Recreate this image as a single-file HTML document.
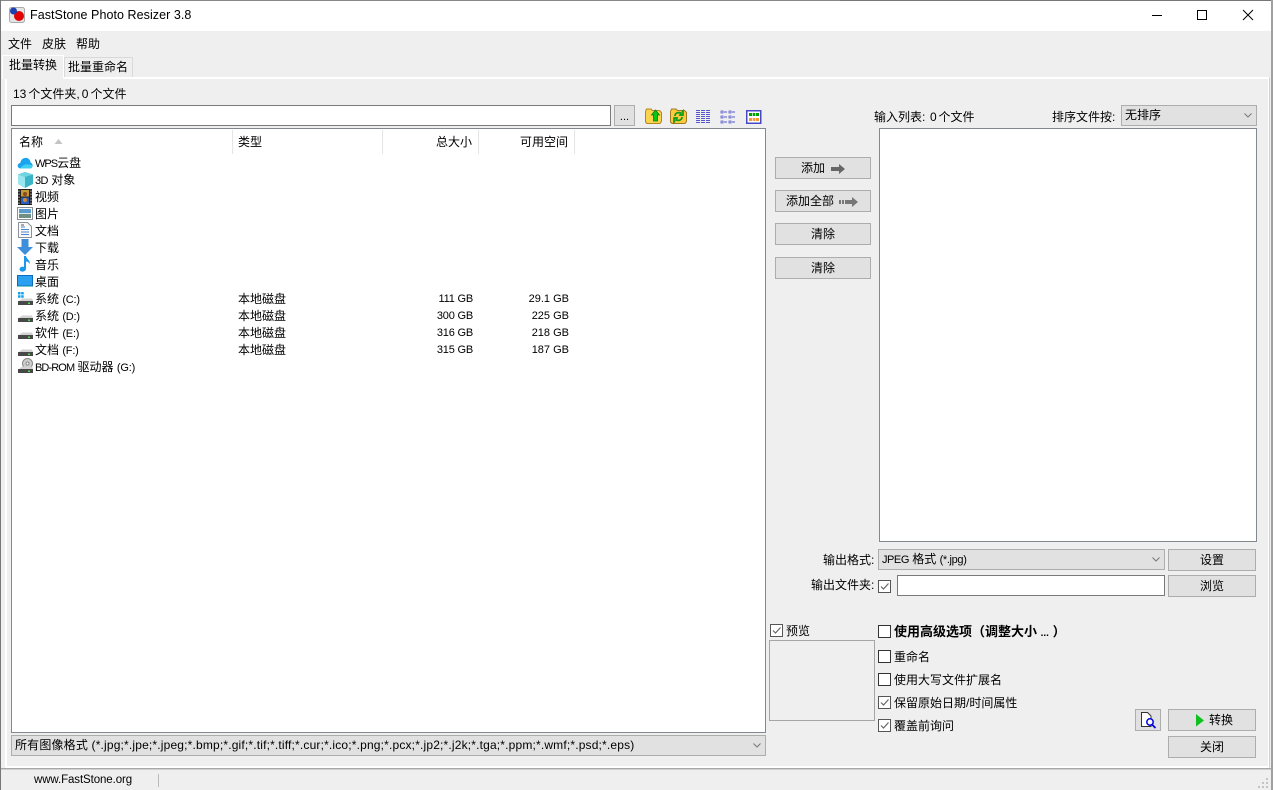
<!DOCTYPE html>
<html><head><meta charset="utf-8"><style>
*{box-sizing:border-box}
html,body{margin:0;padding:0;width:1273px;height:790px;overflow:hidden;background:#efefef}
body{position:relative;font:12px/17px "Liberation Sans","Noto Sans CJK SC",sans-serif;color:#000}
.a,.t{position:absolute}
.t{white-space:nowrap;line-height:17px}
.l{font-size:11px;letter-spacing:-.2px}
.b{position:absolute;background:#e1e1e1;border:1px solid #adadad;text-align:center;line-height:20px}
.i{position:absolute;background:#fff;border:1px solid #7a7a7a}
.c{position:absolute;background:#e1e1e1;border:1px solid #adadad;line-height:19px;padding-left:3px;white-space:nowrap}
.c svg{position:absolute;right:4px;top:7px}
.k{position:absolute;width:13px;height:13px;background:#fff;border:1px solid #333}
.k.on{border-color:#555}
.k svg{position:absolute;left:0;top:0}
svg{position:absolute;overflow:visible}
</style></head><body>
<div class="a" style="left:0;top:0;width:1273px;height:31px;background:#fff"></div>
<div class="a" style="left:0;top:0;width:840px;height:1px;background:#888"></div>
<div class="a" style="left:840px;top:0;width:433px;height:1px;background:#777"></div>
<div class="a" style="left:0;top:0;width:1px;height:790px;background:#777"></div>
<div class="a" style="left:1271px;top:0;width:2px;height:790px;background:#a0a0a0"></div>
<svg style="left:9px;top:7px" width="17" height="17"><rect x=".5" y=".5" width="15" height="15" rx="2" fill="#e4e4e4" stroke="#aaa"/><circle cx="10" cy="9" r="5" fill="#e00000"/><circle cx="4.500" cy="4" r="3.500" fill="#1c3fb0"/></svg>
<div class="t" style="left:30px;top:7px;font-size:12.500px;letter-spacing:.06px">FastStone Photo Resizer 3.8</div>
<div class="a" style="left:1152px;top:15px;width:10px;height:1px;background:#000"></div>
<div class="a" style="left:1197px;top:10px;width:10px;height:10px;border:1px solid #000"></div>
<svg style="left:1243px;top:10px" width="10" height="10"><path d="M0 0L10 10M10 0L0 10" stroke="#000" fill="none"/></svg>
<div class="t" style="left:8px;top:36px">文件</div><div class="t" style="left:42px;top:36px">皮肤</div><div class="t" style="left:76px;top:36px">帮助</div>
<div class="a" style="left:5px;top:77px;width:1265px;height:691px;background:#efefef;border:1px solid #fff;border-right-color:#d0d0d0;box-shadow:inset 0 0 0 1px #fff"></div>
<div class="a" style="left:2px;top:55px;width:62px;height:24px;background:#efefef;border:1px solid #fff;border-bottom:0"></div>
<div class="a" style="left:64px;top:57px;width:69px;height:20px;background:#efefef;border:1px solid #d9d9d9;border-bottom:0"></div>
<div class="t" style="left:9px;top:57px">批量转换</div><div class="t" style="left:68px;top:59px">批量重命名</div>
<div class="t" style="left:13px;top:86px;word-spacing:-1.300px">13 个文件夹, 0 个文件</div>
<div class="i" style="left:11px;top:105px;width:600px;height:21px"></div>
<div class="b" style="left:614px;top:105px;width:21px;height:21px;line-height:22px;font-size:11px">...</div>
<svg style="left:645px;top:108px" width="17" height="16"><path d="M.5 3.500L1.500 1H6L7.500 2.500H14.500L16.500 4.500V13.500L15 15.500H2L.5 14Z" fill="#fdd34d" stroke="#b08722"/><path d="M10.500 2L14.500 7H12.500V13H8.500V7H6.500Z" fill="#08c714" stroke="#067a10" stroke-width=".8"/></svg>
<svg style="left:670px;top:108px" width="17" height="16"><path d="M.5 3.500L1.500 1H6L7.500 2.500H14.500L16.500 4.500V13.500L15 15.500H2L.5 14Z" fill="#fdc93d" stroke="#a07a22"/><path d="M5 8C5 5 8 4 11 5L10 7L13 7V3L12 4M12 9C12 12 9 13 6 12L7 10H4V14L5 13" fill="none" stroke="#0a9b1a" stroke-width="1.700"/></svg>
<svg style="left:695px;top:110px" width="16" height="14"><path d="M1 .5H15M1 2.500H15M1 4.500H15M1 6.500H15M1 8.500H15M1 10.500H15M1 12.500H15" stroke="#5555cc" stroke-dasharray="4 1" fill="none"/></svg>
<svg style="left:720px;top:110px" width="16" height="14"><path d="M1 1H3V3H1ZM1 6H3V8H1ZM1 11H3V13H1ZM9 1H11V3H9ZM9 6H11V8H9ZM9 11H11V13H9Z" fill="none" stroke="#5555cc" stroke-width=".8"/><path d="M4 2H7M4 7H7M4 12H7M12 2H15M12 7H15M12 12H15" stroke="#5555cc"/></svg>
<svg style="left:746px;top:110px" width="16" height="14"><rect x=".75" y=".75" width="14" height="12.500" fill="#fff" stroke="#4848c4" stroke-width="1.500"/><path d="M3 3H6V6H3ZM6.700 3H9.300V6H6.700ZM10 3H13V6H10Z" fill="#00a000"/><path d="M3 8H6V11H3ZM6.700 8H9.300V11H6.700ZM10 8H13V11H10Z" fill="#ff9a2e"/></svg>

<div class="a" style="left:11px;top:128px;width:755px;height:605px;background:#fff;border:1px solid #828790"></div>
<div class="t" style="left:19px;top:134px">名称</div>
<svg style="left:54px;top:139px" width="9" height="6"><path d="M4.500 0L8.500 5H.5Z" fill="#c4c4c4"/></svg>
<div class="a" style="left:232px;top:130px;width:1px;height:24px;background:#e5e5e5"></div>
<div class="t" style="left:238px;top:134px">类型</div>
<div class="a" style="left:382px;top:130px;width:1px;height:24px;background:#e5e5e5"></div>
<div class="t" style="left:436px;top:134px">总大小</div>
<div class="a" style="left:478px;top:130px;width:1px;height:24px;background:#e5e5e5"></div>
<div class="t" style="left:520px;top:134px">可用空间</div>
<div class="a" style="left:574px;top:130px;width:1px;height:24px;background:#e5e5e5"></div>

<svg style="left:17px;top:156px" width="16" height="14"><path d="M4 12.500C1 12.500 0 10 1 8.500C2 7 3 7 3.500 6.500C4 3 7 1.500 10 2C13 3 13.500 5.500 13.500 6.500C15.500 7.500 16 9 15.500 10.500C15 12 14 12.500 12 12.500Z" fill="#1aa3ee"/><path d="M3 12.500C6 8 10 7.500 15.500 9.500C15 12 14 12.500 12 12.500Z" fill="#3fd0f0"/></svg>
<svg style="left:17px;top:172px" width="16" height="16"><path d="M8 0L16 2.500V12L8 16L1 12V2.500Z" fill="#3cb4c8"/><path d="M1 2.500L8 5V16L1 12Z" fill="#9be6ee"/><path d="M1 2.500L8 0L16 2.500L8 5Z" fill="#70d4e2"/></svg>
<svg style="left:18px;top:189px" width="14" height="16"><rect width="14" height="16" fill="#222"/><rect x="3" y="1" width="8" height="6.500" fill="#c49a38"/><rect x="3" y="8.500" width="8" height="6.500" fill="#2a5cc4"/><circle cx="7" cy="5" r="2" fill="#8a4a20"/><circle cx="7" cy="11" r="2" fill="#d08a30"/><path d="M1 1.500V15M13 1.500V15" stroke="#bbb" stroke-dasharray="1.500 1.500"/></svg>
<svg style="left:17px;top:207px" width="16" height="13"><rect x=".5" y=".5" width="15" height="12" fill="#fff" stroke="#8c9199"/><rect x="2" y="2" width="12" height="9" fill="#5a9cd0"/><path d="M2 7C6 5 9 6 14 8V11H2Z" fill="#6f8f80"/><path d="M2 6H14V7H2Z" fill="#d6e6ea"/></svg>
<svg style="left:18px;top:222px" width="14" height="16"><path d="M.5 .5H9.500L13.500 4.500V15.500H.5Z" fill="#fafafa" stroke="#8c9199"/><path d="M3 5H7M3 7.500H11M3 10H11M3 12.500H11" stroke="#4a86c8"/><path d="M3 3H6" stroke="#555"/></svg>
<svg style="left:17px;top:239px" width="16" height="16"><path d="M4.500 0H11.500V8H16L8 16L0 8H4.500Z" fill="#3d8fdc"/></svg>
<svg style="left:19px;top:256px" width="12" height="16"><path d="M5 0H7C7.500 3 11 4 11 8C10 6.500 8.500 5.500 7 5.500V12.500C7 15 4.500 16 2.500 15.500C0 15 0 12 2 11C3 10.500 4 10.500 5 11Z" fill="#1c98ea"/></svg>
<svg style="left:17px;top:275px" width="16" height="12"><rect width="16" height="12" fill="#0f6cbd"/><rect x="1" y="1" width="14" height="9.500" fill="#2aa0f0"/><rect y="11" width="16" height="1" fill="#7cc"/></svg>

<svg style="left:17px;top:291px" width="16" height="15"><path d="M1 1H3.500V3.500H1ZM4.200 1H6.700V3.500H4.200ZM1 4.200H3.500V6.700H1ZM4.200 4.200H6.700V6.700H4.200Z" fill="#12a0ea"/><path d="M2 10L5 7.500H15L16 10Z" fill="#d2d2d2"/><rect x="1" y="10" width="15" height="4" fill="#484848"/><rect x="11" y="11.500" width="2" height="1.500" fill="#4be04b"/></svg>
<svg style="left:17px;top:308px" width="16" height="15"><path d="M2 10L5 7.500H15L16 10Z" fill="#d2d2d2"/><rect x="1" y="10" width="15" height="4" fill="#484848"/><rect x="11" y="11.500" width="2" height="1.500" fill="#4be04b"/></svg>
<svg style="left:17px;top:325px" width="16" height="15"><path d="M2 10L5 7.500H15L16 10Z" fill="#d2d2d2"/><rect x="1" y="10" width="15" height="4" fill="#484848"/><rect x="11" y="11.500" width="2" height="1.500" fill="#4be04b"/></svg>
<svg style="left:17px;top:342px" width="16" height="15"><path d="M2 10L5 7.500H15L16 10Z" fill="#d2d2d2"/><rect x="1" y="10" width="15" height="4" fill="#484848"/><rect x="11" y="11.500" width="2" height="1.500" fill="#4be04b"/></svg>
<svg style="left:17px;top:358px" width="16" height="16"><circle cx="10.500" cy="5.500" r="5" fill="#ccc" stroke="#888"/><circle cx="10.500" cy="5.500" r="1.500" fill="#fff" stroke="#888"/><path d="M2 11L5 8.500H15L16 11Z" fill="#d2d2d2"/><rect x="1" y="11" width="15" height="4" fill="#484848"/><rect x="11" y="12.500" width="2" height="1.500" fill="#4be04b"/></svg>

<div class="t" style="left:35px;top:155px"><span class="l" style="letter-spacing:-1px">WPS</span>云盘</div>
<div class="t" style="left:35px;top:172px"><span class="l" style="letter-spacing:-.6px">3D</span> 对象</div>
<div class="t" style="left:35px;top:189px">视频</div>
<div class="t" style="left:35px;top:206px">图片</div>
<div class="t" style="left:35px;top:223px">文档</div>
<div class="t" style="left:35px;top:240px">下载</div>
<div class="t" style="left:35px;top:257px">音乐</div>
<div class="t" style="left:35px;top:274px">桌面</div>
<div class="t" style="left:35px;top:291px">系统 <span class="l">(C:)</span></div>
<div class="t" style="left:35px;top:308px">系统 <span class="l">(D:)</span></div>
<div class="t" style="left:35px;top:325px">软件 <span class="l">(E:)</span></div>
<div class="t" style="left:35px;top:342px">文档 <span class="l">(F:)</span></div>
<div class="t" style="left:35px;top:359px"><span class="l" style="letter-spacing:-.9px">BD-ROM</span> 驱动器 <span class="l">(G:)</span></div>
<div class="t" style="left:238px;top:291px">本地磁盘</div>
<div class="t" style="left:238px;top:308px">本地磁盘</div>
<div class="t" style="left:238px;top:325px">本地磁盘</div>
<div class="t" style="left:238px;top:342px">本地磁盘</div>
<div class="t" style="right:800px;top:291px;font-size:11px;letter-spacing:-.2px">111 GB</div>
<div class="t" style="right:800px;top:308px;font-size:11px;letter-spacing:-.2px">300 GB</div>
<div class="t" style="right:800px;top:325px;font-size:11px;letter-spacing:-.2px">316 GB</div>
<div class="t" style="right:800px;top:342px;font-size:11px;letter-spacing:-.2px">315 GB</div>
<div class="t" style="right:704px;top:291px;font-size:11px">29.1 GB</div>
<div class="t" style="right:704px;top:308px;font-size:11px">225 GB</div>
<div class="t" style="right:704px;top:325px;font-size:11px">218 GB</div>
<div class="t" style="right:704px;top:342px;font-size:11px">187 GB</div>

<div class="c" style="left:11px;top:735px;width:755px;height:21px;font-size:12px;letter-spacing:.17px">所有图像格式 (*.jpg;*.jpe;*.jpeg;*.bmp;*.gif;*.tif;*.tiff;*.cur;*.ico;*.png;*.pcx;*.jp2;*.j2k;*.tga;*.ppm;*.wmf;*.psd;*.eps)<svg width="8" height="4"><path d="M.5 .5L4 4L7.500 .5" fill="none" stroke="#777"/></svg></div>

<div class="b" style="left:775px;top:157px;width:96px;height:22px"><span style="margin-right:20px">添加</span><svg style="left:55px;top:6px" width="15" height="10"><path d="M0 3H8V0L14 5L8 10V7H0Z" fill="#666"/></svg></div>
<div class="b" style="left:775px;top:190px;width:96px;height:22px"><span style="margin-right:26px">添加全部</span><svg style="left:63px;top:6px" width="20" height="10"><path d="M0 3H2V7H0ZM3 3H5V7H3ZM6 3H13V0L19 5L13 10V7H6Z" fill="#777"/></svg></div>
<div class="b" style="left:775px;top:223px;width:96px;height:22px">清除</div>
<div class="b" style="left:775px;top:257px;width:96px;height:22px">清除</div>

<div class="t" style="left:874px;top:109px">输入列表:</div>
<div class="t" style="left:930px;top:109px;word-spacing:-1.500px">0 个文件</div>
<div class="t" style="left:1052px;top:109px">排序文件按:</div>
<div class="c" style="left:1121px;top:105px;width:136px;height:21px">无排序<svg width="8" height="4"><path d="M.5 .5L4 4L7.500 .5" fill="none" stroke="#777"/></svg></div>
<div class="a" style="left:879px;top:128px;width:378px;height:414px;background:#fff;border:1px solid #828790"></div>

<div class="t" style="left:823px;top:552px">输出格式:</div>
<div class="c" style="left:878px;top:549px;width:287px;height:21px"><span class="l" style="letter-spacing:-.45px">JPEG</span> 格式 <span class="l" style="letter-spacing:-.35px">(*.jpg)</span><svg width="8" height="4"><path d="M.5 .5L4 4L7.500 .5" fill="none" stroke="#777"/></svg></div>
<div class="b" style="left:1168px;top:549px;width:88px;height:22px">设置</div>
<div class="t" style="left:811px;top:577px">输出文件夹:</div>
<div class="k on" style="left:878px;top:580px"><svg width="11" height="11"><path d="M2 5.500L4.500 8L9.500 2.500" fill="none" stroke="#666" stroke-width="1.200"/></svg></div>
<div class="i" style="left:897px;top:575px;width:268px;height:21px"></div>
<div class="b" style="left:1168px;top:575px;width:88px;height:22px">浏览</div>

<div class="k on" style="left:770px;top:624px"><svg width="11" height="11"><path d="M2 5.500L4.500 8L9.500 2.500" fill="none" stroke="#666" stroke-width="1.200"/></svg></div>
<div class="t" style="left:786px;top:623px">预览</div>
<div class="a" style="left:769px;top:640px;width:106px;height:81px;background:#efefef;border:1px solid #a5a5a5"></div>

<div class="k" style="left:878px;top:625px"></div>
<div class="t" style="left:894px;top:623px;font-weight:bold;font-size:13px">使用高级选项（调整大小 <span style="font-size:10px">...</span> ）</div>
<div class="k" style="left:878px;top:650px"></div>
<div class="t" style="left:894px;top:649px">重命名</div>
<div class="k" style="left:878px;top:673px"></div>
<div class="t" style="left:894px;top:672px">使用大写文件扩展名</div>
<div class="k on" style="left:878px;top:696px"><svg width="11" height="11"><path d="M2 5.500L4.500 8L9.500 2.500" fill="none" stroke="#666" stroke-width="1.200"/></svg></div>
<div class="t" style="left:894px;top:695px">保留原始日期/时间属性</div>
<div class="k on" style="left:878px;top:719px"><svg width="11" height="11"><path d="M2 5.500L4.500 8L9.500 2.500" fill="none" stroke="#666" stroke-width="1.200"/></svg></div>
<div class="t" style="left:894px;top:718px">覆盖前询问</div>

<div class="b" style="left:1135px;top:709px;width:26px;height:22px"><svg style="left:5px;top:2px" width="16" height="17"><path d="M.5 .5H6.500L10 4V14.500H.5Z" fill="#fff" stroke="#333"/><circle cx="9" cy="10" r="3.200" fill="#fff" stroke="#0000e0" stroke-width="1.500"/><path d="M11 12.500L14.500 16" stroke="#0000e0" stroke-width="1.800"/></svg></div>
<div class="b" style="left:1168px;top:709px;width:88px;height:22px"><span style="margin-left:18px">转换</span><svg style="left:27px;top:4px" width="9" height="13"><path d="M0 0L8 6.500L0 12.500Z" fill="#0fc01f"/></svg></div>
<div class="b" style="left:1168px;top:736px;width:88px;height:22px">关闭</div>

<div class="a" style="left:1px;top:768px;width:1270px;height:1px;background:#a8a8a8"></div>
<div class="a" style="left:1px;top:769px;width:1270px;height:1px;background:#d0d0d0"></div>
<div class="t" style="left:34px;top:772px;font-size:11.500px;letter-spacing:-.1px">www.FastStone.org</div>
<div class="a" style="left:158px;top:774px;width:1px;height:13px;background:#bbb"></div>
<svg style="left:1258px;top:778px" width="11" height="11"><path d="M8 0H10V2H8ZM4 4H6V6H4ZM8 4H10V6H8ZM0 8H2V10H0ZM4 8H6V10H4ZM8 8H10V10H8Z" fill="#c4c4c4"/></svg>
</body></html>
